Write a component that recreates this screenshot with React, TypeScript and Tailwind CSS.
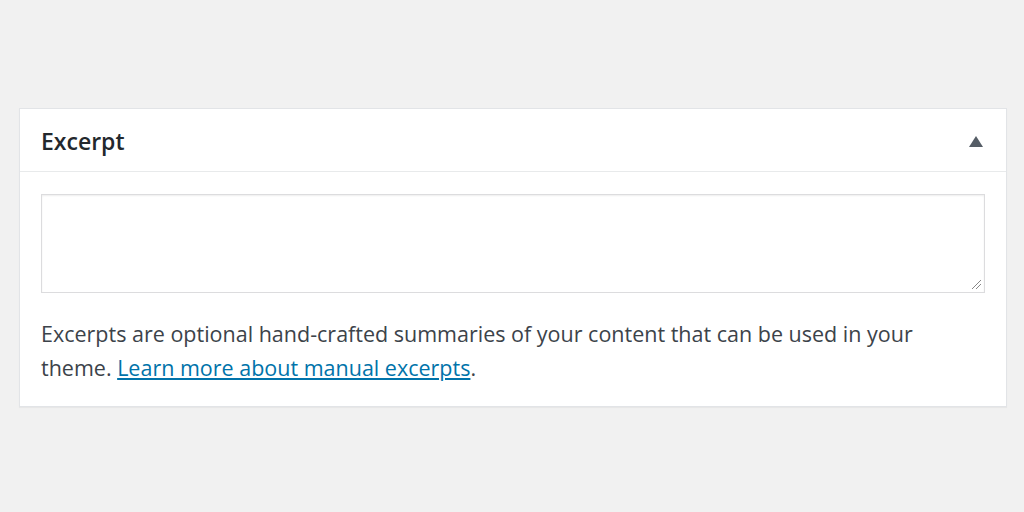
import React from "react";

export default function App() {
  return (
    <div
      className="w-[1024px] h-[512px] bg-[#f1f1f1] pt-[108px] pl-[19px]"
      style={{ fontFamily: '"Open Sans", "Noto Sans", sans-serif' }}
    >
      <div className="w-[988px] h-[299px] bg-white border border-[#e2e4e7] shadow-[0_1px_1px_rgba(0,0,0,0.04)]">
        <div className="h-[63px] flex items-center justify-between pl-[21px] pr-[23px] pt-[3px] border-b border-[#e8eaeb]">
          <span className="text-[23px] font-semibold text-[#23282d]">Excerpt</span>
          <svg width="14" height="11" viewBox="0 0 14 11">
            <polygon points="7,0 14,11 0,11" fill="#555d66" />
          </svg>
        </div>
        <div className="px-[21px] pt-[22px]">
          <div className="relative h-[99px] border border-[#dcdcde] shadow-[inset_0_1px_2px_rgba(0,0,0,0.07)]">
            <svg className="absolute right-[2px] bottom-[2px]" width="12" height="12" viewBox="0 0 12 12">
              <line x1="11" y1="2" x2="2" y2="11" stroke="#888" strokeWidth="1" />
              <line x1="11" y1="6" x2="6" y2="11" stroke="#888" strokeWidth="1" />
            </svg>
          </div>
          <p className="mt-[24px] text-[21.5px] leading-[34px] text-[#3c434a]">
            Excerpts are optional hand-crafted summaries of your content that can be used in your
            <br />
            theme. <a className="text-[#0073aa] underline underline-offset-2">Learn more about manual excerpts</a>.
          </p>
        </div>
      </div>
    </div>
  );
}
